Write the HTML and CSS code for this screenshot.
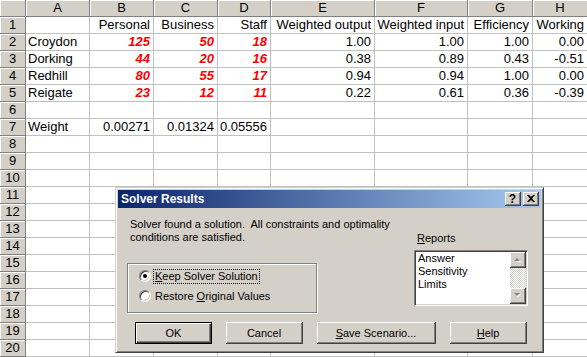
FILE: index.html
```html
<!DOCTYPE html>
<html lang="en">
<head>
    <meta charset="UTF-8">
    <title>Solver Results</title>
    <link rel="stylesheet" href="styles.css">
</head>
<body>
    <div class="sheet">
        <div class="grid">
            <div class="hd"></div><div class="hd">A</div><div class="hd">B</div><div class="hd">C</div><div class="hd">D</div><div class="hd">E</div><div class="hd">F</div><div class="hd">G</div><div class="hd">H</div>

            <div class="hd">1</div><div></div><div class="r">Personal</div><div class="r">Business</div><div class="r">Staff</div><div class="r">Weighted output</div><div class="r">Weighted input</div><div class="r">Efficiency</div><div class="r">Working</div>
            <div class="hd">2</div><div>Croydon</div><div class="r in">125</div><div class="r in">50</div><div class="r in">18</div><div class="r">1.00</div><div class="r">1.00</div><div class="r">1.00</div><div class="r">0.00</div>
            <div class="hd">3</div><div>Dorking</div><div class="r in">44</div><div class="r in">20</div><div class="r in">16</div><div class="r">0.38</div><div class="r">0.89</div><div class="r">0.43</div><div class="r">-0.51</div>
            <div class="hd">4</div><div>Redhill</div><div class="r in">80</div><div class="r in">55</div><div class="r in">17</div><div class="r">0.94</div><div class="r">0.94</div><div class="r">1.00</div><div class="r">0.00</div>
            <div class="hd">5</div><div>Reigate</div><div class="r in">23</div><div class="r in">12</div><div class="r in">11</div><div class="r">0.22</div><div class="r">0.61</div><div class="r">0.36</div><div class="r">-0.39</div>
            <div class="hd">6</div><div></div><div></div><div></div><div></div><div></div><div></div><div></div><div></div>
            <div class="hd">7</div><div>Weight</div><div class="r">0.00271</div><div class="r">0.01324</div><div class="r">0.05556</div><div></div><div></div><div></div><div></div>
            <div class="hd">8</div><div></div><div></div><div></div><div></div><div></div><div></div><div></div><div></div>
            <div class="hd">9</div><div></div><div></div><div></div><div></div><div></div><div></div><div></div><div></div>
            <div class="hd">10</div><div></div><div></div><div></div><div></div><div></div><div></div><div></div><div></div>
            <div class="hd">11</div><div></div><div></div><div></div><div></div><div></div><div></div><div></div><div></div>
            <div class="hd">12</div><div></div><div></div><div></div><div></div><div></div><div></div><div></div><div></div>
            <div class="hd">13</div><div></div><div></div><div></div><div></div><div></div><div></div><div></div><div></div>
            <div class="hd">14</div><div></div><div></div><div></div><div></div><div></div><div></div><div></div><div></div>
            <div class="hd">15</div><div></div><div></div><div></div><div></div><div></div><div></div><div></div><div></div>
            <div class="hd">16</div><div></div><div></div><div></div><div></div><div></div><div></div><div></div><div></div>
            <div class="hd">17</div><div></div><div></div><div></div><div></div><div></div><div></div><div></div><div></div>
            <div class="hd">18</div><div></div><div></div><div></div><div></div><div></div><div></div><div></div><div></div>
            <div class="hd">19</div><div></div><div></div><div></div><div></div><div></div><div></div><div></div><div></div>
            <div class="hd">20</div><div></div><div></div><div></div><div></div><div></div><div></div><div></div><div></div>
        </div>

        <!-- Solver Results dialog -->
        <div class="dialog">
            <div class="titlebar">
                <span class="title">Solver Results</span>
                <span class="tb-btn tb-help">?</span>
                <span class="tb-btn">
                    <svg width="8" height="7" viewBox="0 0 8 7"><path d="M0 0h2l2 2 2-2h2L5 3.5 8 7H6L4 5 2 7H0l3-3.5z" fill="#000"/></svg>
                </span>
            </div>
            <div class="dialog-body">
                <div class="left">
                    <div class="message">Solver found a solution.&nbsp; All constraints and optimality<br>conditions are satisfied.</div>
                    <div class="groupbox">
                        <div class="radio-row">
                            <span class="radio checked"></span>
                            <span class="focus"><u>K</u>eep Solver Solution</span>
                        </div>
                        <div class="radio-row">
                            <span class="radio"></span>
                            <span class="plain">Restore <u>O</u>riginal Values</span>
                        </div>
                    </div>
                </div>
                <div class="right">
                    <div class="reports-label"><u>R</u>eports</div>
                    <div class="listbox">
                        <div class="items">
                            <div>Answer</div>
                            <div>Sensitivity</div>
                            <div>Limits</div>
                        </div>
                        <div class="scrollbar">
                            <span class="sb-btn">
                                <svg width="7" height="5" viewBox="0 0 7 5"><path d="M1 5h6L4 2z" fill="#fff"/><path d="M0 4h6L3 1z" fill="#808080"/></svg>
                            </span>
                            <span class="sb-track"></span>
                            <span class="sb-btn">
                                <svg width="7" height="5" viewBox="0 0 7 5"><path d="M1 1h6L4 4z" fill="#fff"/><path d="M0 0h6L3 3z" fill="#808080"/></svg>
                            </span>
                        </div>
                    </div>
                </div>
                <div class="buttons">
                    <span class="btn default">OK</span>
                    <span class="btn">Cancel</span>
                    <span class="btn wide"><u>S</u>ave Scenario...</span>
                    <span class="btn"><u>H</u>elp</span>
                </div>
            </div>
        </div>
    </div>
</body>
</html>
```
FILE: styles.css
```css
body {
    margin: 0;
    background: #fff;
    font-family: "Liberation Sans", Arial, sans-serif;
    overflow: hidden;
}
.sheet {
    position: relative;
    width: 587px;
    height: 357px;
    overflow: hidden;
}
.grid {
    display: grid;
    grid-template-columns: 26px 64px 64px 64px 53px 104px 93px 65px 55px;
    grid-auto-rows: 17px;
    font-size: 13px;
    color: #000;
}
.grid > div {
    box-sizing: border-box;
    border-right: 1px solid #c0c0c0;
    border-bottom: 1px solid #c0c0c0;
    line-height: 16px;
    padding: 0 3px 0 2px;
    white-space: nowrap;
    overflow: hidden;
}
.grid .hd {
    background: #d4d0c8;
    border-color: #808080;
    box-shadow: inset 1px 1px #fff;
    text-align: center;
    padding: 0;
}
.r {
    text-align: right;
}
.in {
    color: #f00;
    font-weight: bold;
    font-style: italic;
}

/* dialog */
.dialog {
    position: absolute;
    left: 115px;
    top: 187px;
    width: 429px;
    height: 166px;
    box-sizing: border-box;
    background: #d4d0c8;
    border: 1px solid;
    border-color: #d4d0c8 #404040 #404040 #d4d0c8;
    box-shadow: inset 1px 1px #fff, inset -1px -1px #808080;
    padding: 2px;
    font-size: 11px;
    color: #000;
}
.titlebar {
    display: flex;
    align-items: center;
    height: 18px;
    padding: 0 2px 0 3px;
    background: linear-gradient(to right, #0a246a, #a6caf0);
}
.title {
    flex: 1;
    color: #fff;
    font-weight: bold;
    font-size: 12px;
}
.tb-btn {
    display: flex;
    align-items: center;
    justify-content: center;
    width: 16px;
    height: 14px;
    box-sizing: border-box;
    background: #d4d0c8;
    border-right: 1px solid #404040;
    border-bottom: 1px solid #404040;
    box-shadow: inset 1px 1px #fff, inset -1px -1px #808080;
    font-weight: bold;
    font-size: 12px;
    line-height: 12px;
}
.tb-help {
    margin-right: 2px;
}
.dialog-body {
    display: grid;
    grid-template-columns: 1fr 114px;
    padding: 10px 13px 0 9px;
}
.message {
    margin-left: 3px;
    line-height: 13px;
    white-space: nowrap;
}
.groupbox {
    box-sizing: border-box;
    width: 190px;
    height: 50px;
    margin-top: 19px;
    padding: 2px 0 0 11px;
    border: 1px solid #808080;
    box-shadow: inset 1px 1px #fff, 1px 1px #fff;
}
.radio-row {
    display: flex;
    align-items: center;
    height: 20px;
}
.radio {
    position: relative;
    width: 12px;
    height: 12px;
    box-sizing: border-box;
    border-radius: 50%;
    border: 1px solid;
    border-color: #808080 #fff #fff #808080;
    background: #fff;
    box-shadow: inset 1px 1px #404040, inset -1px -1px #d4d0c8;
    margin-right: 2px;
}
.radio.checked::after {
    content: "";
    position: absolute;
    left: 3px;
    top: 3px;
    width: 4px;
    height: 4px;
    border-radius: 50%;
    background: #000;
}
.focus {
    border: 1px dotted #000;
    padding: 0 1px;
    line-height: 13px;
}
.plain {
    padding: 0 2px;
}
.reports-label {
    margin: 14px 0 0 3px;
    line-height: 13px;
}
.listbox {
    display: flex;
    height: 56px;
    margin-top: 5px;
    box-sizing: border-box;
    background: #fff;
    border: 1px solid;
    border-color: #808080 #fff #fff #808080;
    box-shadow: inset 1px 1px #404040, inset -1px -1px #d4d0c8;
    padding: 1px;
}
.items {
    flex: 1;
    padding-left: 2px;
    line-height: 13px;
}
.scrollbar {
    display: flex;
    flex-direction: column;
    width: 16px;
}
.sb-btn {
    display: flex;
    align-items: center;
    justify-content: center;
    height: 16px;
    box-sizing: border-box;
    background: #d4d0c8;
    border-right: 1px solid #404040;
    border-bottom: 1px solid #404040;
    box-shadow: inset 1px 1px #fff, inset -1px -1px #808080;
}
.sb-track {
    flex: 1;
    background: repeating-conic-gradient(#fff 0 25%, #d4d0c8 0 50%) 0 0 / 2px 2px;
}
.buttons {
    grid-column: 1 / 3;
    display: flex;
    gap: 14px;
    margin: 9px 0 0 8px;
}
.btn {
    display: flex;
    align-items: center;
    justify-content: center;
    width: 77px;
    height: 22px;
    box-sizing: border-box;
    background: #d4d0c8;
    border-right: 1px solid #404040;
    border-bottom: 1px solid #404040;
    box-shadow: inset 1px 1px #fff, inset -1px -1px #808080;
}
.btn.wide {
    width: 119px;
}
.btn.default {
    border: 1px solid #000;
    box-shadow: inset 1px 1px #fff, inset -1px -1px #404040, inset -2px -2px #808080;
}
```
